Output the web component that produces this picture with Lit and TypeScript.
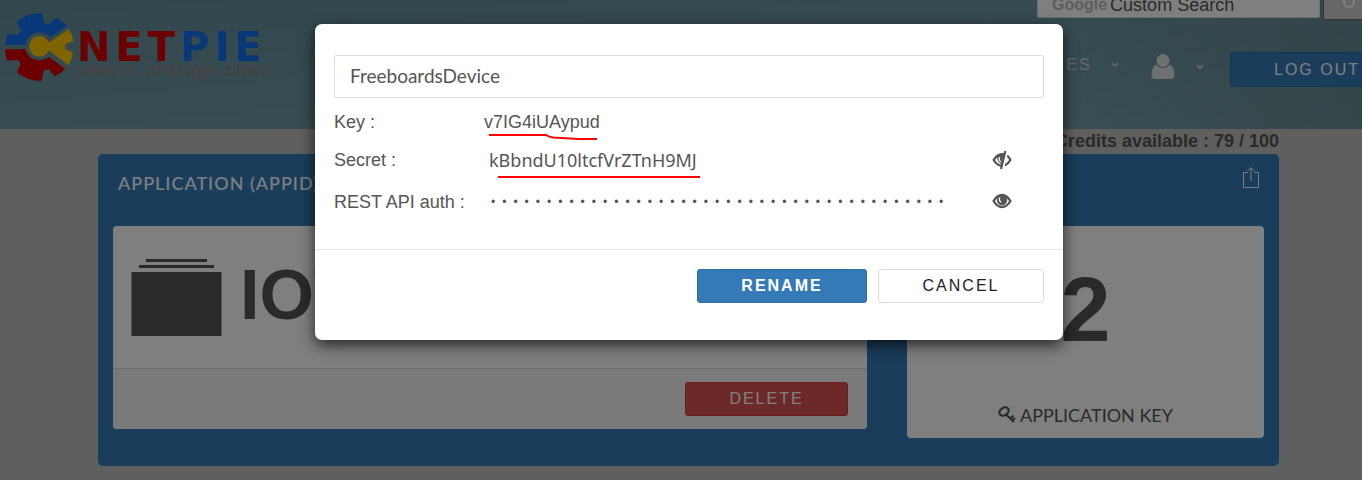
import { LitElement, html, css, svg } from "lit";
import { customElement, state } from "lit/decorators.js";

const chevron = html`<svg class="chevron" viewBox="0 0 8 6" aria-hidden="true"><path d="M1 1.2 4 4.2 7 1.2" fill="none" stroke="currentColor" stroke-width="1.5"/></svg>`;

const pupil = svg`<circle cx="10" cy="7" r="5.2" fill="currentColor"/><path d="M7.8 4.6Q6.400 8 9.2 9.200" fill="none" stroke="#fff" stroke-width="1.3"/>`;

const eyeOpen = html`<svg class="eye" viewBox="0 0 20 20" aria-hidden="true">
  <g transform="translate(0 1)"><path d="M1.6 8Q5 2 10 2T18.4 8Q15 14 10 14T1.6 8Z" fill="none" stroke="currentColor" stroke-width="2.4"/>${pupil}</g>
</svg>`;

const eyeClosed = html`<svg class="eye" viewBox="0 0 20 20" aria-hidden="true">
  <g transform="translate(0 2)"><path d="M9.500 13.800Q5 13.500 1.700 8 5 2 11.500 2" fill="none" stroke="currentColor" stroke-width="2.4"/>
  <path d="M5.400 2.800Q4.200 9.600 9 12L12.500 1.500Z" fill="currentColor"/><path d="M7.600 5Q6.400 8.400 8.800 9.800" fill="none" stroke="#fff" stroke-width="1.3"/>
  <path d="M15.200 3.600Q17.200 5.400 18.400 8 16.400 11.600 13 13.200" fill="none" stroke="currentColor" stroke-width="2.2"/>
  <path d="M14.600-.8 10.600 17" stroke="#fff" stroke-width="2.600"/><path d="M13.400-.9 9 17" stroke="currentColor" stroke-width="2.200"/></g>
</svg>`;

const gear = html`<svg class="gear" viewBox="15 39 207 204" aria-hidden="true">
  <path fill="#1270f0" d="M15 135 22 102 55 104 63 90 50 66Q80 40 120 39L127 40 132 70 146 73 170 53Q188 62 201 78L152 112Q140 97 117 97A43 43 0 0 0 76 135Z"/>
  <path fill="#d80000" d="M15 148H76Q84 180 118 181 136 180 148 171L196 207Q180 222 164 229L146 208 131 211 125 243Q80 243 51 217L62 193 55 180 22 182Q15 165 15 148Z"/>
  <path fill="#ffc800" d="M145 128 206 88Q216 102 220 123L196 133V148L219 157Q216 180 206 196L145 150Z"/>
  <circle fill="#ffc800" cx="118" cy="139" r="31"/>
</svg>`;

@customElement("app-root")
export class AppRoot extends LitElement {
  @state() private name = "FreeboardsDevice";

  static styles = css`
    :host { display: block; position: relative; height: 100vh; overflow: hidden; background: #bebebe; color: #555; font: 18px/26px "Liberation Sans", Arial, sans-serif; }
    * { box-sizing: border-box; }
    svg { display: block; }
    button { margin: 0; padding: 0 40px; height: 34px; border: 1px solid; border-radius: 3px; font: 400 16px/20px "Liberation Sans", Arial, sans-serif; letter-spacing: 2px; }
    input { font: inherit; color: inherit; }

    .page { margin-right: -15px; }
    .header { display: flex; justify-content: space-between; height: 129px; background: linear-gradient(90deg, #66929c00 75%, #5d7d8590), linear-gradient(175deg, #66909c, #74a2aa); }
    .logo { display: flex; gap: 3px; padding: 13px 0 0 5px; color: #8c8488; text-decoration: none; height: 82px; }
    .gear { width: 69px; height: 68px; }
    .brand { display: flex; flex-direction: column; padding-top: 16px; }
    .word { font: 700 40px/36px "DejaVu Sans", sans-serif; letter-spacing: 5px; color: #1270f0; }
    .red { color: #d80000; }
    .tag { font: 700 19px/12px "Liberation Mono", monospace; }

    .tools { display: flex; flex-direction: column; gap: 32px; }
    .search { display: flex; gap: 3px; height: 20px; align-items: flex-end; padding-left: 18px; }
    .field { display: flex; align-items: center; gap: 3px; width: 283px; height: 26px; margin-bottom: 2px; padding-left: 14px; background: #fff; border: 1px solid #ddd; border-radius: 2px; }
    .google { font-weight: 700; font-size: 16px; color: #bbb; }
    .query { width: 200px; border: 0; padding: 0; background: none; outline: 0; }
    .query::placeholder { color: #555; opacity: 1; }
    .go { width: 54px; padding: 0; background: #cecece; border-color: #666; color: #fff; display: flex; justify-content: center; align-items: center; }
    .nav { display: flex; align-items: center; color: #fff; height: 35px; margin-right: -27px; }
    .menu { display: flex; align-items: center; gap: 19px; color: #ccd; text-decoration: none; font-size: 16px; letter-spacing: 2px; margin: 0 32px 10px -24px; }
    .account { display: flex; align-items: center; gap: 21px; color: #dde0e4; padding-bottom: 6px; }
    .person { width: 24px; height: 25px; }
    .chevron { width: 8px; height: 6px; }
    .logout { height: 35px; width: 174px; background: #337ab7; border-color: #2e6da4; color: #fff; margin-left: auto; }

    .content { width: 1181px; max-width: 100%; margin: 0 auto; }
    .credits { text-align: right; font-weight: 700; line-height: 25px; }
    .panel { background: #337ab7; border-radius: 5px; padding: 0 15px 28px; color: #fff; min-height: 312px; }
    .bar { display: flex; justify-content: space-between; height: 72px; padding: 12px 4px 0 5px; }
    .title { margin: 0; padding-top: 4px; font: 500 18px/26px Lato, sans-serif; letter-spacing: 1px; }
    .share { width: 18px; height: 23px; }
    .cards { display: flex; gap: 40px; align-items: flex-start; color: #555; }
    .card { background: #fff; border-radius: 4px; overflow: hidden; }
    .app { flex: 754; }
    .count { flex: 357; height: 212px; text-align: center; display: flex; flex-direction: column; justify-content: space-between; padding: 34px 0 10px; }
    .summary { display: flex; gap: 18px; height: 142px; padding: 33px 18px 0; }
    .folder { width: 91px; height: 77px; }
    .appname { font: 700 70px/72px "Liberation Sans", Arial, sans-serif; }
    .foot { display: flex; justify-content: flex-end; padding: 13px 19px; background: #f5f5f5; border-top: 1px solid #ddd; }
    .delete { width: 163px; background: #d9534f; border-color: #d43f3a; color: #fff; }
    .number { font: 700 90px/100px "Liberation Sans", Arial, sans-serif; }
    .keys { display: flex; gap: 4px; justify-content: center; align-items: center; font: 18px/26px Lato, sans-serif; }
    .key { width: 18px; height: 18px; }

    .backdrop { position: absolute; inset: 0 -16px 0 0; background: rgba(0, 0, 0, .5); padding-top: 24px; }
    .modal { width: 748px; max-width: 100%; margin: 0 auto; background: #fff; border-radius: 7px; box-shadow: 0 5px 15px rgba(0, 0, 0, .7); }
    .body { padding: 31px 19px 24px; }
    .name { display: block; width: 100%; height: 43px; padding: 0 15px 2px; border: 1px solid #ddd; border-radius: 2px; font: 19px/26px Lato, sans-serif; outline: 0; }
    .rows { display: grid; grid-template-columns: 150px 1fr 52px; grid-template-rows: 39px 38px 46px; margin-top: 4px; align-items: center; }
    .row { display: contents; }
    .value { position: relative; display: block; }
    .secret { font-family: "Noto Sans", sans-serif; padding-left: 5px; }
    .mark { position: absolute; left: 5px; top: 24px; }
    .mark.low { left: 14px; top: 28px; }
    .auth { width: 460px; border: 0; padding: 0; margin-left: 7px; outline: 0; font-size: 12px; letter-spacing: 7px; }
    .toggle { width: 20px; height: 20px; border: 0; padding: 0; background: none; color: #555; }
    .eye { width: 20px; height: 20px; }
    .actions { display: flex; justify-content: flex-end; gap: 11px; border-top: 1px solid #e5e5e5; padding: 19px 19px 37px; }
    .rename { width: 170px; background: #337ab7; border-color: #2e6da4; color: #fff; font-weight: 700; }
    .cancel { width: 166px; background: #fff; border-color: #ddd; color: #222; }
  `;

  render() {
    return html`
      <div class="page">
        <header class="header">
          <a class="logo" href="#">${gear}
            <span class="brand"><span class="word"><span class="red">NET</span>PIE</span><span class="tag">where things chat</span></span>
          </a>
          <div class="tools">
            <form class="search">
              <label class="field"><span class="google">Google</span><input class="query" placeholder="Custom Search" /></label>
              <button class="go" type="button" aria-label="Search"><svg width="16" height="16" viewBox="0 0 16 16"><circle cx="7" cy="7" r="5" fill="none" stroke="currentColor" stroke-width="2"/></svg></button>
            </form>
            <nav class="nav">
              <a class="menu" href="#">SERVICES ${chevron}</a>
              <a class="account" href="#" aria-label="Account"><svg class="person" viewBox="0 0 24 25"><circle cx="12" cy="6.5" r="6.5" fill="currentColor"/><path fill="currentColor" d="M5.5 10.5Q8 14 12 14T18.500 10.500Q23.500 13 23.500 21Q23.500 25 20 25H4Q.5 25 .5 21 .5 13 5.500 10.500Z"/></svg>${chevron}</a>
              <button class="logout">LOG OUT</button>
            </nav>
          </div>
        </header>
        <main class="content">
          <div class="credits">Credits available : 79 / 100</div>
          <section class="panel">
            <div class="bar">
              <h2 class="title">APPLICATION (APPID)</h2>
              <svg class="share" viewBox="0 0 18 23"><path d="M6 6.500H1.500V21.500H16.500V6.500H12M9 15V2M5.500 5 9 1.500 12.500 5" fill="none" stroke="currentColor"/></svg>
            </div>
            <div class="cards">
              <article class="card app">
                <div class="summary">
                  <svg class="folder" viewBox="0 0 91 77"><path fill="currentColor" d="M15 0H76V3H15ZM8 6H83V9H8ZM.5 13H90.500V77H.5Z"/></svg>
                  <span class="appname">IOT</span>
                </div>
                <div class="foot"><button class="delete">DELETE</button></div>
              </article>
              <article class="card count">
                <span class="number">2</span>
                <span class="keys"><svg class="key" viewBox="0 0 18 18"><ellipse cx="6" cy="5.600" rx="5" ry="3.700" transform="rotate(-35 6 5.600)" fill="none" stroke="currentColor" stroke-width="2.200"/><path d="M7.500 8 16 16M12.500 12.500 15.500 9.500M14.500 14.500 17 12" fill="none" stroke="currentColor" stroke-width="2.200"/></svg>APPLICATION KEY</span>
              </article>
            </div>
          </section>
        </main>
      </div>
      <div class="backdrop">
        <div class="modal" role="dialog" aria-label="Device">
          <div class="body">
            <input class="name" aria-label="Device name" .value=${this.name} />
            <div class="rows">
              <div class="row"><span>Key :</span><span class="value">v7IG4iUAypud<svg class="mark" width="110" height="8" viewBox="0 0 110 8"><path d="M0 2H57Q60 4 64 4.500L90 6H108" fill="none" stroke="#f00" stroke-width="2"/></svg></span><span></span></div>
              <div class="row"><span>Secret :</span><span class="value secret">kBbndU10ltcfVrZTnH9MJ<svg class="mark low" width="202" height="4" viewBox="0 0 202 4"><path d="M0 2H202" stroke="#f00" stroke-width="2"/></svg></span><button class="toggle" aria-label="Hide secret">${eyeClosed}</button></div>
              <div class="row"><label for="auth">REST API auth :</label><input class="auth" id="auth" type="password" value="12345678901234567890123456789012345678901" /><button class="toggle" aria-label="Show auth">${eyeOpen}</button></div>
            </div>
          </div>
          <div class="actions"><button class="rename">RENAME</button><button class="cancel">CANCEL</button></div>
        </div>
      </div>`;
  }
}
